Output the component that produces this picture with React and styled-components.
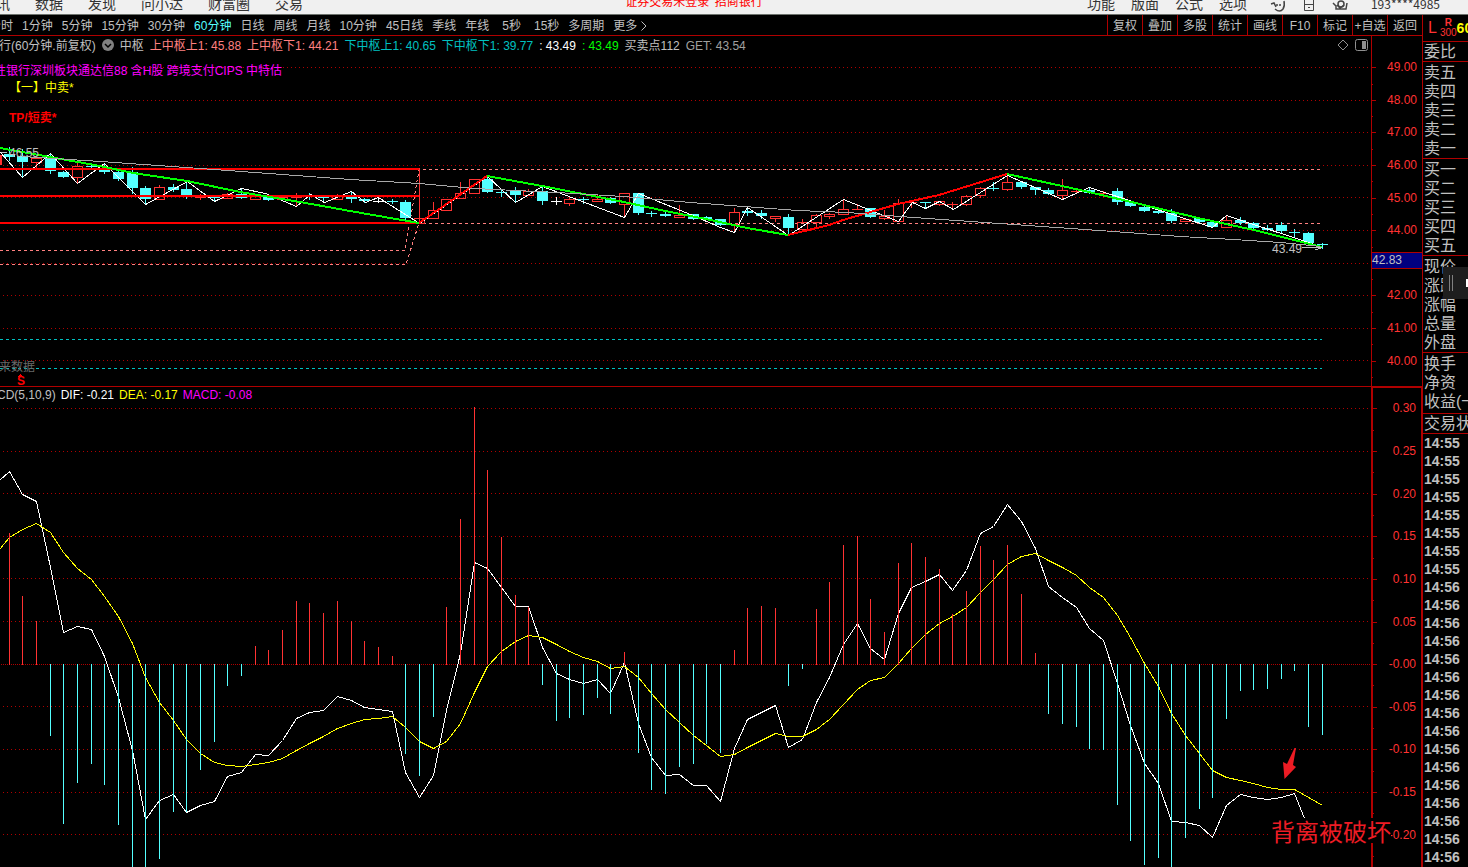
import React from 'react';
import styled, { createGlobalStyle } from 'styled-components';

const RED = '#b00000';
const UP = '#ff3232';
const DOWN = '#54ffff';
const PINK = '#ff8080';
const TEAL = '#00c0c0';

const Global = createGlobalStyle`
  * { box-sizing: border-box; }
  body { margin: 0; background: #000; }
  button { font: inherit; color: inherit; background: none; border: 0; margin: 0; padding: 0; cursor: pointer; white-space: nowrap; }
  ul, ol { list-style: none; margin: 0; padding: 0; }
`;

const App_ = styled.div`
  height: 100vh;
  display: flex;
  flex-direction: column;
  overflow: hidden;
  background: #000;
  color: #c0c0c0;
  font: 12px/18px "Liberation Sans", "Noto Sans CJK SC", sans-serif;
  white-space: nowrap;
`;

/* top menu */
const MenuBar = styled.header`
  flex: none;
  height: 15px;
  overflow: hidden;
  background: #f0f0f0;
  border-bottom: 1px solid #6d726d;
  color: #333;
`;
const MenuRow = styled.div`
  display: grid;
  grid-template-columns: 1fr auto 1fr;
  height: 18px;
  margin-top: -8px;
  font: 14px/18px "Noto Sans CJK SC", sans-serif;
`;
const MenuGroup = styled.nav`
  display: flex;
  gap: ${(p) => p.$gap}px;
  margin-left: ${(p) => p.$start || 0}px;
`;
const LoginState = styled.a`
  color: #f00;
  font-size: 12px;
  text-decoration: none;
  padding-right: 80px;
`;
const MenuRight = styled.div`
  display: flex;
  justify-content: flex-end;
  padding-right: 28px;
`;
const MenuIcons = styled.div`
  display: flex;
  align-items: flex-end;
  gap: 18px;
  margin: 0 23px;
  svg { display: block; }
`;
const Account = styled.button`
  font-size: 12px;
  padding-top: 3px;
`;

/* workspace */
const Workspace = styled.div`
  flex: 1;
  min-height: 0;
  display: flex;
`;
const Main = styled.main`
  flex: 1;
  min-width: 0;
  display: flex;
  flex-direction: column;
`;
const Toolbar = styled.div`
  flex: none;
  height: 21px;
  display: flex;
  justify-content: space-between;
  border-bottom: 1px solid ${RED};
`;
const Periods = styled.nav`
  display: flex;
  gap: 9px;
  margin-left: -11px;
`;
const Period = styled.button`
  color: ${(p) => (p.$active ? DOWN : '#c0c0c0')};
  padding: 2px ${(p) => (p.$wide ? 4 : 0)}px 0;
  display: flex;
  align-items: center;
  gap: 4px;
`;
const Tools = styled.div`
  display: flex;
`;
const Tool = styled.button`
  width: 35px;
  padding-top: 2px;
  border-left: 1px solid ${RED};
`;

/* chart panes */
const Pane = styled.section`
  position: relative;
  display: flex;
  flex: ${(p) => (p.$height ? 'none' : '1')};
  height: ${(p) => (p.$height ? p.$height + 'px' : 'auto')};
  min-height: 0;
  overflow: hidden;
  border-bottom: ${(p) => (p.$height ? `1px solid ${RED}` : '0')};
`;
const Plot = styled.div`
  position: relative;
  flex: 1;
  min-width: 0;
  overflow: hidden;
`;
const Legend = styled.div`
  display: flex;
  align-items: center;
  gap: 6px;
  height: 18px;
  margin-left: -1px;
  svg { flex: none; }
`;
const MacdLegend = styled(Legend)`
  height: 17px;
  gap: 5px;
  padding-bottom: 4px;
  margin-left: -21px;
`;
const Value = styled.span`
  color: ${(p) => p.$color || '#c0c0c0'};
  padding-top: 2px;
`;
const LegendTools = styled.div`
  display: flex;
  gap: 6px;
  margin-left: auto;
  margin-right: 3px;
`;
const IconButton = styled.button`
  display: flex;
`;
const Drawing = styled.svg`
  display: block;
  width: 100%;
  height: ${(p) => p.$height}px;
  shape-rendering: crispEdges;
`;
const Note = styled.span`
  position: absolute;
  left: ${(p) => p.$x}px;
  top: ${(p) => p.$y}px;
  color: ${(p) => p.$color};
  font-weight: ${(p) => (p.$bold ? 'bold' : 'normal')};
`;
const Annotation = styled.span`
  position: absolute;
  right: 31px;
  top: 431px;
  background: #000;
  color: #ed1c24;
  font: 24px/25px "Noto Sans CJK SC", sans-serif;
`;

const Axis = styled.div`
  position: relative;
  flex: none;
  width: 51px;
  padding-top: ${(p) => (p.$framed ? 0 : 15)}px;
  border: 0 solid ${RED};
  border-width: ${(p) => (p.$framed ? '0 1px 0 2px' : '0 0 0 1px')};
  box-shadow: ${(p) => (p.$framed ? `inset 0 1px ${RED}` : 'none')};
`;
const Scale = styled.ul`
  display: flex;
  flex-direction: column;
  height: ${(p) => p.$height}px;
  color: ${UP};
  text-align: right;
`;
const Mark = styled.li`
  position: relative;
  flex: 1;
  display: flex;
  align-items: center;
  justify-content: flex-end;
  padding-right: 5px;
  &::before, &::after {
    content: '';
    position: absolute;
    left: 0;
    height: 1px;
    background: ${RED};
  }
  &::before { width: 4px; top: 50%; }
  &::after { width: 1px; top: 100%; }
`;
const PriceTag = styled.div`
  position: absolute;
  left: 0;
  right: 0;
  top: 216px;
  height: 17px;
  line-height: 15px;
  background: #000080;
  border: solid ${RED};
  border-width: 1px 0;
`;

/* quote column */
const Quote = styled.aside`
  position: relative;
  flex: none;
  width: 46px;
  overflow: hidden;
  border-left: 1px solid ${RED};
`;
const QuoteHead = styled.div`
  display: flex;
  align-items: center;
  height: 27px;
  border-bottom: 1px solid ${RED};
  color: ${UP};
  padding-left: 5px;
  font-size: 16px;
`;
const Badge = styled.span`
  display: flex;
  flex-direction: column;
  align-items: center;
  margin-left: 3px;
  font-size: 10px;
  line-height: 10px;
`;
const Code = styled.span`
  color: #ff0;
  font-weight: bold;
  font-size: 14px;
`;
const QuoteGroup = styled.ul`
  font-size: 16px;
  line-height: 19px;
  padding: ${(p) => p.$pad || 0}px 0 ${(p) => p.$end || 0}px 1px;
  border-bottom: 1px solid ${RED};
`;
const Ticks = styled.ol`
  font: bold 14px/18px "Liberation Sans", sans-serif;
  padding-left: 1px;
`;
const Drawer = styled.button`
  position: absolute;
  right: 0;
  top: 252px;
  width: 25px;
  height: 32px;
  background: #1e1e1e;
  svg { display: block; }
`;

const X = (i) => Math.floor(9 + 13.68 * i);

/* kind, high, low, body top, body bottom */
const candles = `d147 160 154 157|d149 177 156 162|u158 167 158 162|d153 173 158 171|d171 177 172 177|u162 183 166 177|d165 168 166 167|d163 173 170 172|d171 180 172 179|d167 193 172 188|d186 204 188 199|u185 199 187 199|d184 191 187 190|d182 198 189 196|u194 199 197 198|d196 201 197 198|u193 198 194 198|d188 198 194 198|u196 199 196 199|d196 200 196 200|u197 199 197 199|u193 206 197 197|d193 199 196 196|d196 202 197 197|u194 199 196 199|d191 202 197 199|d198 202 199 201|w197 202 201 201|d199 203 201 201|d200 220 202 218|u218 223 218 223|u202 218 210 218|u199 210 199 210|u182 198 193 198|u179 193 179 193|d176 192 179 192|d190 196 192 193|d187 202 190 195|u189 195 191 195|d186 204 191 201|w197 204 201 201|u197 205 199 203|d197 203 199 199|u194 201 199 201|d197 203 198 203|u193 217 193 204|d193 214 193 213|d211 216 213 213|d211 216 214 216|u205 217 215 217|d214 219 214 219|d216 219 217 219|d219 225 219 225|u208 232 212 224|d207 215 211 213|d210 218 213 216|u216 221 216 218|d214 235 217 228|u219 229 222 229|u214 228 215 222|u213 218 214 216|u199 214 209 214|u204 209 209 209|d208 217 208 217|u210 219 216 218|u199 221 203 221|u202 207 202 202|d202 208 202 202|u201 205 201 204|u202 209 204 204|u195 205 196 204|u187 197 188 195|d182 190 188 188|u175 190 182 189|d181 188 182 187|d187 194 187 190|d188 194 190 194|u179 199 190 195|u190 192 191 191|d187 193 190 193|u191 196 193 193|d188 204 191 202|d202 206 202 206|d205 211 207 211|d211 213 211 213|d209 222 213 221|u219 221 219 221|d218 222 218 222|d221 227 222 227|u215 227 220 227|d217 224 220 223|d222 228 223 228|d225 230 228 230|d222 233 225 231|d229 236 232 232|d232 243 233 243|d243 248 244 244`
  .split('|')
  .map((s) => ({ kind: s[0], v: s.slice(1).split(' ').map(Number) }));

const bars = [533,596,621,736,824,783,764,785,825,900,900,859,812,812,770,742,686,676,646,650,630,601,603,613,601,621,641,647,656,754,776,717,607,519,407,470,537,595,607,685,721,718,715,698,714,652,753,790,794,767,764,744,753,650,608,606,608,686,669,609,582,545,536,599,632,563,543,557,569,614,591,546,560,545,594,653,714,724,727,749,750,805,841,865,858,900,838,809,798,719,691,690,689,679,671,727,735];
const dif = [471,494,501,567,632,626,629,656,697,750,819,800,794,812,805,801,776,772,754,755,740,718,712,710,696,700,707,709,711,772,797,775,710,653,562,568,587,606,606,647,673,679,683,679,693,662,723,757,775,774,785,785,801,748,719,712,705,747,739,702,677,644,623,648,659,613,587,581,574,590,570,533,526,504,521,548,586,597,607,628,640,683,725,763,783,821,822,825,837,805,794,797,799,797,793,828,841];
const dea = [537,529,523,532,552,568,579,596,616,643,677,702,720,739,753,762,765,766,764,762,758,750,743,736,728,723,719,718,716,727,741,748,741,723,692,666,651,641,635,637,644,651,657,661,668,666,677,693,709,722,735,745,756,754,747,740,733,736,736,729,719,704,689,680,677,663,648,634,623,616,607,592,579,564,556,553,560,567,575,587,597,615,637,663,686,713,735,753,770,777,780,783,787,789,789,797,805];

const line = (ys, y0) => `-1,${y0} ` + ys.map((y, i) => `${X(i)},${y}`).join(' ');

const ZIGZAG = '0,152 22,177 50,153 77,183 104,163 145,204 187,181 214,201 241,188 265,193 296,206 310,194 324,202 351,191 365,202 378,197 419,223 487,176 515,202 542,186 624,217 638,193 690,214 720,227 734,232 747,207 788,235 843,199 898,221 912,202 925,208 939,201 953,209 1007,175 1062,199 1089,187 1144,205 1212,227 1226,215 1320,246';
const TREND = '22,156 100,161 200,168 350,179 419,183 474,188 556,192 623,196 690,202 797,210 847,212 913,217 1013,224 1113,231 1180,236 1233,239 1280,242 1320,246';
const STROKES = [
  ['#00ff00', '0,148 50,157 100,166 133,173 187,181 240,192 300,202 350,211 419,223'],
  ['#ff0000', '419,223 487,176'],
  ['#00ff00', '487,176 542,186 583,194 624,202 665,211 706,219 747,228 788,235'],
  ['#ff0000', '788,235 829,225 843,220 898,204 939,195 1007,174'],
  ['#00ff00', '1007,174 1062,186 1089,192 1144,205 1198,218 1254,230 1322,247'],
];

function GridLines({ ys, zero }) {
  return ys.map((y) => (
    <line key={y} x1={y === zero ? 1 : 3} x2="100%" y1={y + 0.5} y2={y + 0.5} stroke={RED} strokeDasharray={y === zero ? '1 1' : '1 3'} />
  ));
}

function Candle({ i, kind, v }) {
  const [hi, lo, top, bottom] = v;
  const x = X(i);
  const color = kind === 'u' ? UP : kind === 'd' ? DOWN : '#fff';
  const hollow = kind === 'u' && bottom - top > 1;
  return (
    <g fill={color}>
      <rect x={x} y={hi} width="1" height={Math.max(0, top - hi)} />
      <rect x={x} y={bottom} width="1" height={Math.max(0, lo - bottom + 1)} />
      {hollow ? (
        <rect x={x - 4.5} y={top + 0.5} width="10" height={bottom - top} fill="none" stroke={color} />
      ) : (
        <rect x={x - 5} y={top} width="11" height={Math.max(1, bottom - top)} />
      )}
    </g>
  );
}

function PriceDrawing() {
  return (
    <Drawing $height={332} role="img" aria-label="K线图">
      <g transform="translate(0 -54)" fill="none">
        <GridLines ys={[67, 100, 132, 165, 197, 230, 263, 295, 328, 360]} />
        <g strokeDasharray="3 3">
          <path d="M423 169.5H1322M423 223.5H1322M0 250.5H405L419 170M0 264.5H406L419 223" stroke={PINK} />
          <path d="M0 339.5H1322M0 368.5H1322" stroke={TEAL} />
        </g>
        <rect x="0" y="155" width="2" height="10" fill={UP} />
        {candles.map((c, i) => (
          <Candle key={i} i={i} {...c} />
        ))}
        <polyline points={ZIGZAG} stroke="#fff" transform="translate(.5 .5)" />
        <path d="M0 169H419M0 196H419M0 223H419" stroke="#f00" strokeWidth="2" />
        <path d="M419.5 168V223" stroke={UP} />
        {STROKES.map(([color, points]) => (
          <polyline key={points} points={points} stroke={color} strokeWidth="2" />
        ))}
        <polyline points={TREND} stroke="#a8a8a8" transform="translate(.5 .5)" />
        <path d="M1302 247.5H1321M1315 250L1322 247.5M1 152.5H7" stroke="#c0c0c0" />
        <path d="M17 377L20.500 374L24 377Z" fill="#f00" />
      </g>
    </Drawing>
  );
}

function MacdDrawing() {
  return (
    <Drawing $height={463} role="img" aria-label="MACD">
      <g transform="translate(0 -404)" fill="none">
        <GridLines ys={[408, 451, 493, 536, 578, 621, 664, 706, 749, 792, 834]} zero={664} />
        <polyline points={line(dif, 480)} stroke="#fff" transform="translate(.5 .5)" />
        <polyline points={line(dea, 549)} stroke="#ff0" transform="translate(.5 .5)" />
        {bars.map((y, i) => (
          <rect key={i} x={X(i)} y={Math.min(y, 664)} width="1" height={Math.abs(y - 664) + (y < 664 ? 1 : 0)} fill={y < 664 ? UP : DOWN} />
        ))}
        <path d="M1284.500 779L1283 762L1287 764L1294.500 748L1296 748L1293 765L1296 767Z" fill="#ed1c24" shapeRendering="auto" />
      </g>
    </Drawing>
  );
}

const periods = ['分时', '1分钟', '5分钟', '15分钟', '30分钟', '60分钟', '日线', '周线', '月线', '10分钟', '45日线', '季线', '年线', '5秒', '15秒', '多周期'];
const tools = ['复权', '叠加', '多股', '统计', '画线', 'F10', '标记', '+自选', '返回'];
const prices = ['49.00', '48.00', '47.00', '46.00', '45.00', '44.00', '', '42.00', '41.00', '40.00'];
const macdScale = ['0.30', '0.25', '0.20', '0.15', '0.10', '0.05', '-0.00', '-0.05', '-0.10', '-0.15', '-0.20'];
const legend = [
  ['中枢'],
  ['上中枢上1: 45.88', PINK],
  ['上中枢下1: 44.21', PINK],
  ['下中枢上1: 40.65', TEAL],
  ['下中枢下1: 39.77', TEAL],
  [': 43.49', '#fff'],
  [': 43.49', '#0f0'],
  ['买卖点112'],
  ['GET: 43.54', '#a0a0a0'],
];
const groups = [
  { rows: ['委比'] },
  { rows: ['卖五', '卖四', '卖三', '卖二', '卖一'], pad: 1 },
  { rows: ['买一', '买二', '买三', '买四', '买五'], pad: 1 },
  { rows: ['现价', '涨跌', '涨幅', '总量', '外盘'], pad: 1 },
  { rows: ['换手', '净资', '收益(一)'], pad: 1, end: 2 },
  { rows: ['交易状态'] },
];
const times = Array.from({ length: 24 }, (_, i) => (i < 8 ? '14:55' : '14:56'));

export default function App() {
  return (
    <App_>
      <Global />
      <MenuBar>
        <MenuRow>
          <MenuGroup $gap={25} $start={-18}>
            {['资讯', '数据', '发现', '问小达', '财富圈', '交易'].map((t) => (
              <button key={t}>{t}</button>
            ))}
          </MenuGroup>
          <LoginState href="#login">证券交易未登录&nbsp; 招商银行</LoginState>
          <MenuRight>
            <MenuGroup $gap={16}>
              {['功能', '版面', '公式', '选项'].map((t) => (
                <button key={t}>{t}</button>
              ))}
            </MenuGroup>
            <MenuIcons>
              <svg width="16" height="18" fill="none" stroke="#444" strokeWidth="1.500">
                <path d="M1 9L4 8L6 12M7 9V11M10 9V11M5 14Q10 18 13 14Q15 11 14 6" />
              </svg>
              <svg width="10" height="18" fill="none" stroke="#444">
                <path d="M.5 2.500H9.500V15.500H.5ZM.5 9.500H9.500M4 12.500H6" />
              </svg>
              <svg width="16" height="18" fill="none" stroke="#444" strokeWidth="1.500">
                <path d="M1 8L4 11V14H14L15 8M5 10L8 13L12 10" />
                <circle cx="9" cy="9" r="3" />
              </svg>
            </MenuIcons>
            <Account>193****4985</Account>
          </MenuRight>
        </MenuRow>
      </MenuBar>

      <Workspace>
        <Main>
          <Toolbar>
            <Periods>
              {periods.map((t) => (
                <Period key={t} $active={t === '60分钟'} $wide={t === '5秒'}>{t}</Period>
              ))}
              <Period>
                更多
                <svg width="6" height="12" fill="none" stroke="#c0c0c0"><path d="M.5 1.500L5 6L.5 10.500" /></svg>
              </Period>
            </Periods>
            <Tools>
              {tools.map((t) => (
                <Tool key={t}>{t}</Tool>
              ))}
            </Tools>
          </Toolbar>

          <Pane $height={351}>
            <Plot>
              <Legend>
                <Value>行(60分钟.前复权)</Value>
                <IconButton aria-label="展开">
                  <svg width="12" height="12"><circle cx="6" cy="6" r="6" fill="#808080" /><path d="M3 5L6 8L9 5" fill="none" stroke="#000" strokeWidth="1.500" /></svg>
                </IconButton>
                {legend.map(([t, c], i) => (
                  <Value key={i} $color={c}>{t}</Value>
                ))}
                <LegendTools>
                  <IconButton aria-label="标记点">
                    <svg width="12" height="12" fill="none" stroke="#909090"><path d="M6 1L11 6L6 11L1 6Z" /></svg>
                  </IconButton>
                  <IconButton aria-label="侧栏">
                    <svg width="13" height="12" fill="none" stroke="#909090"><rect x=".5" y=".5" width="12" height="11" rx="2" /><rect x="7" y="2" width="4" height="8" fill="#909090" stroke="none" /></svg>
                  </IconButton>
                </LegendTools>
              </Legend>
              <PriceDrawing />
              <Note $x={-6} $y={26} $color="#f0f">性银行深圳板块通达信88 含H股 跨境支付CIPS 中特估</Note>
              <Note $x={9} $y={43} $color="#ff0">【一】中卖*</Note>
              <Note $x={9} $y={73} $color="#f00" $bold>TP/短卖*</Note>
              <Note $x={9} $y={108} $color="#c0c0c0">46.55</Note>
              <Note $x={1272} $y={204} $color="#c0c0c0">43.49</Note>
              <Note $x={-1} $y={322} $color="#686868">来数据</Note>
              <Note $x={17} $y={336} $color="#f00" $bold>S</Note>
            </Plot>
            <Axis>
              <Scale $height={326}>
                {prices.map((t, i) => (
                  <Mark key={i}>{t}</Mark>
                ))}
              </Scale>
              <PriceTag>42.83</PriceTag>
            </Axis>
          </Pane>

          <Pane>
            <Plot>
              <MacdLegend>
                <Value>MACD(5,10,9)</Value>
                <Value $color="#fff">DIF: -0.21</Value>
                <Value $color="#ff0">DEA: -0.17</Value>
                <Value $color="#f0f">MACD: -0.08</Value>
              </MacdLegend>
              <MacdDrawing />
            </Plot>
            <Axis $framed>
              <Scale $height={469}>
                {macdScale.map((t) => (
                  <Mark key={t}>{t}</Mark>
                ))}
              </Scale>
            </Axis>
            <Annotation>背离被破坏</Annotation>
          </Pane>
        </Main>

        <Quote>
          <QuoteHead>
            L
            <Badge><b>R</b><span>300</span></Badge>
            <Code>600036</Code>
          </QuoteHead>
          {groups.map((g) => (
            <QuoteGroup key={g.rows[0]} $pad={g.pad} $end={g.end}>
              {g.rows.map((r) => (
                <li key={r}>{r}</li>
              ))}
            </QuoteGroup>
          ))}
          <Ticks>
            {times.map((t, i) => (
              <li key={i}>{t}</li>
            ))}
          </Ticks>
          <Drawer aria-label="展开侧栏">
            <svg width="25" height="32"><path d="M6.500 8V24M9.500 8V24" stroke="#808080" /><rect x="23" y="12" width="2" height="8" fill="#fff" /></svg>
          </Drawer>
        </Quote>
      </Workspace>
    </App_>
  );
}
